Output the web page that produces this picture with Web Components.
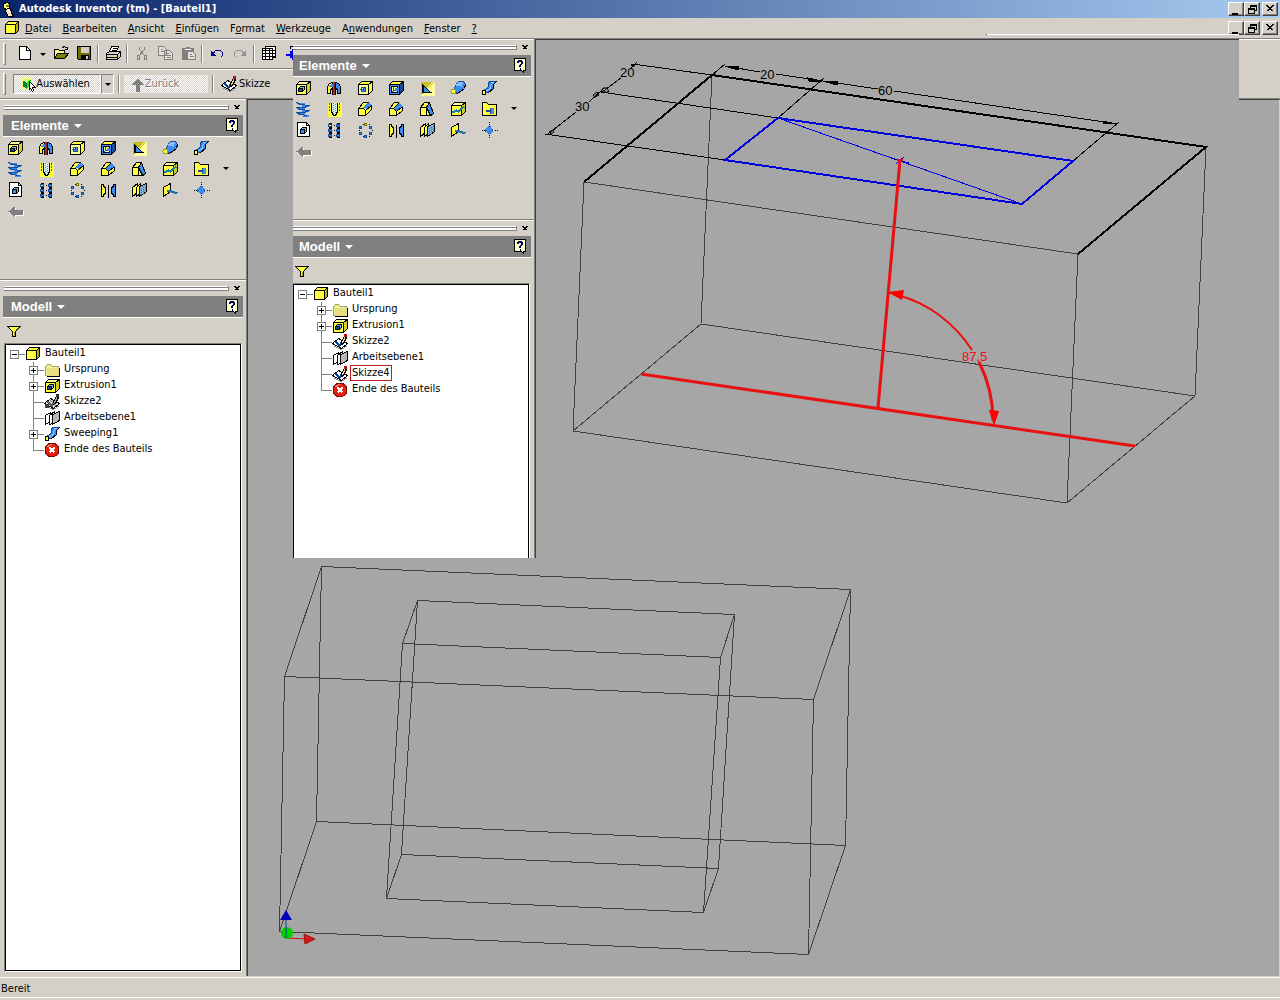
<!DOCTYPE html>
<html lang="de">
<head>
<meta charset="utf-8">
<title>Autodesk Inventor (tm) - [Bauteil1]</title>
<style>
    html, body { height: 100%; }
    body {
        margin: 0;
        overflow: hidden;
        background: #d4d0c8;
        color: #000;
        font: 11px/16px "DejaVu Sans Condensed", "DejaVu Sans", sans-serif;
        --face: #d4d0c8;
        --shadow: #808080;
        --dark: #404040;
    }
</style>
</head>
<body>
<inventor-app></inventor-app>

<script>
const Y = '#ffff40', B = '#3a8cf0', D = '#184a98', K = '#000';

// shared parts of the drawings
const cube = (front, top, side) => `
    <path d="M1 4L4 1H15V10L11 14H1Z" fill="${top}" stroke="${K}"/>
    <path d="M11 4L15 1V10L11 14Z" fill="${side}" stroke="${K}"/>
    <path d="M1 4H11V14H1Z" fill="${front}" stroke="${K}"/>`;
const dots = list => list.map(([x, y, c]) => `<path d="M${x} ${y}h3v2h-3z" fill="${c || B}" stroke="${D}"/><path d="M${x} ${y - 1}h3M${x} ${y + 3}h3" stroke="${K}"/>`).join('');
const sketch = (paper, pen, tip, mark) => `
    <path d="M0 9L6 4L15 9L9 14Z" fill="${paper}" stroke="${K}"/>
    <path d="M2 12L9 15L15 11" fill="none" stroke="#888"/>
    <path d="M3 7L7 11L9 8" fill="none" stroke="${mark}" stroke-width="2"/>
    <path d="M9 10V7L12 2L14 3L11 9Z" fill="${pen}" stroke="${K}"/>
    <path d="M12 0H14V2H12Z" fill="${tip}" stroke="${tip}"/>`;

const ICONS = {
    part: `<path d="M1 4L4 1H14V10L11 13H1Z" fill="${Y}" stroke="${K}"/><path d="M11 4L14 1V10L11 13Z" fill="#b8b000" stroke="${K}"/><path d="M1 4H11V13H1Z" fill="${Y}" stroke="${K}"/>`,
    logo: `<path d="M5 6L9 7L10 11L12 15H7L4 10Z" fill="#ffe0c0" stroke="${K}"/><path d="M2 3L5 1L8 2V6L5 8L2 6Z" fill="#ffff80" stroke="${K}"/><path d="M6 7V10M8 7V11" stroke="#fff"/><rect x="4" y="3" width="3" height="2" fill="#808020"/>`,
    extrude: cube(Y, '#ffffa0', '#d8d020') + `<path d="M3 8L5 6H9V9L7 11H3Z" fill="#70b8ff" stroke="${K}"/><path d="M3 8H7V11H3Z" fill="${D}" stroke="${K}"/>`,
    revolve: `<path d="M1 6L3 3L6 2V8L4 9V13H1Z" fill="${Y}" stroke="${K}"/><path d="M2 6L4 4L6 3V6H2Z" fill="${B}"/><path d="M9 2L12 3L14 6V13H11V9L9 8Z" fill="${B}" stroke="${K}"/><path d="M6 6V14M9 6V14" stroke="${K}"/><path d="M7 1V14" stroke="#e02020"/><path d="M8 1V14" stroke="#902020"/>`,
    hole: cube('#ffff90', Y, Y) + `<circle cx="6" cy="9" r="2.5" fill="${B}" stroke="${D}"/><path d="M4 8V7H6V9H4" fill="#ffffc0" stroke="${D}"/>`,
    shell: cube(B, Y, D) + `<path d="M3 6H9V12H3Z" fill="#ffffa0" stroke="${K}"/><path d="M5 6V10H9M5 10L3 12" fill="none" stroke="${D}"/><path d="M6 7H9V10H6Z" fill="${B}"/>`,
    rib: `<path d="M1 1H15V15H1Z" fill="#ffffa0"/><path d="M1 1H15L1 15Z" fill="#c8c020"/><path d="M3 4V12H11Z" fill="${B}" stroke="${K}"/><path d="M4 5V12H12" fill="none" stroke="${K}"/><path d="M7 8L14 1" stroke="#f8f880"/>`,
    loft: `<path d="M5 5L8 1H13L15 4L14 8L7 13L3 11Z" fill="${B}" stroke="${D}"/><path d="M8 1H13L11 6L5 5Z" fill="#80c0ff"/><path d="M7 13L14 8L15 4" fill="none" stroke="${K}"/><circle cx="3" cy="11" r="2.5" fill="${Y}" stroke="#a0a000"/>`,
    sweep: `<path d="M7 2L9 1H15L12 4V8L7 12L2 11L3 9L6 8L7 5Z" fill="${B}" stroke="${D}"/><path d="M9 2H12L9 5V8L5 10" fill="none" stroke="#80c8ff"/><path d="M15 1L12 4V8L7 12" fill="none" stroke="${K}"/><path d="M1 10H4V14H1Z" fill="${Y}" stroke="${K}"/>`,
    coil: `<path d="M2 2H9M6 4H13M2 7H9M6 9H13M2 12H9M7 14H13" fill="none" stroke="${B}" stroke-width="2"/><path d="M1 1L5 3L13 4L9 6L1 6L5 8L13 9L9 11L1 11L5 13L12 14" fill="none" stroke="${D}"/>`,
    thread: `<rect x="1" y="1" width="14" height="14" fill="${Y}"/><path d="M5 1H11V11L8 14L5 11Z" fill="#d8f0f0"/><path d="M3 1V10M13 1V10" stroke="#206080" stroke-dasharray="2 1"/><path d="M5 1V10L7 14H9L11 10V1" fill="none" stroke="${K}"/><path d="M7 1V12M9 2V12" stroke="#40a0b0" stroke-dasharray="1 1"/>`,
    fillet: `<path d="M1 7L6 1H11L14 4V8L8 14H1Z" fill="${Y}" stroke="${K}"/><path d="M5 6L10 1H12L14 4L9 9L8 7Z" fill="${B}"/><path d="M1 7H6L8 9V14M8 9L14 4" fill="none" stroke="${K}"/>`,
    chamfer: `<path d="M1 7L6 1H10L14 5V9L8 14H1Z" fill="${Y}" stroke="${K}"/><path d="M5 6L10 1L14 5L8 10Z" fill="${B}"/><path d="M1 7H5L8 10V14M8 10L14 5M5 7L10 2" fill="none" stroke="${K}"/>`,
    draft: `<path d="M1 6L5 1H10L14 12L12 14H1Z" fill="${Y}" stroke="${K}"/><path d="M7 6L10 1L14 12L11 14Z" fill="${B}" stroke="${K}"/><path d="M1 6H7V14" fill="none" stroke="${K}"/>`,
    split: cube(Y, '#ffffa0', '#d8d020') + `<path d="M1 10H4L6 9L8 10L10 8L14 5" fill="none" stroke="#2080a0" stroke-width="2"/>`,
    derive: `<path d="M1 1H5L7 3H15V14H1Z" fill="${Y}" stroke="${K}"/><path d="M4 8H8V6H10L12 8V11L10 12H8V10H4Z" fill="${D}"/><path d="M9 6H12V12H9Z" fill="${B}"/>`,
    sheet: `<path d="M2 0H11L14 3V14H2Z" fill="#fff" stroke="${K}"/><path d="M11 0V3H14" fill="none" stroke="${K}"/><path d="M5 7L7 5H11V9L9 11H5Z" fill="#70b8ff" stroke="${K}"/><path d="M5 7H9V11H5Z" fill="${B}" stroke="${K}"/>`,
    rectpattern: dots([[2, 2, Y], [10, 2], [2, 7], [10, 7], [2, 12], [10, 12]]) + `<path d="M7 3H8M7 8H8M7 13H8" stroke="${K}"/>`,
    circpattern: `<g fill="${B}" stroke="${D}"><path d="M7 1h2v2h-2z" fill="${Y}" stroke="#707000"/><path d="M2 4h2v2h-2zM12 4h2v2h-2zM2 10h2v2h-2zM12 10h2v2h-2zM7 13h2v2h-2z"/></g><path d="M5 2h1M11 2h1M1 8h1M14 8h1M5 14h1M11 14h1" stroke="${K}"/>`,
    mirror: `<path d="M1 2H3V4L5 5V11L3 12V14H1Z" fill="${Y}" stroke="${K}"/><path d="M15 2H13V4L11 5V11L13 12V14H15Z" fill="${B}" stroke="${K}"/><path d="M8 2V15" stroke="${K}"/>`,
    plane: `<path d="M1 5L6 1V10L1 14Z" fill="${Y}" stroke="${K}"/><path d="M5 5L9 1V11L5 14Z" fill="${Y}" stroke="${K}"/><path d="M8 4L15 1V9L8 14Z" fill="#80b0d8" stroke="${K}"/><path d="M10 5V12M12 4V11M14 3V9" stroke="#4070a0" stroke-dasharray="1 1"/>`,
    axis: `<path d="M1 5L8 1V9L1 14Z" fill="${Y}" stroke="${K}"/><path d="M5 8L9 9L15 11" fill="none" stroke="#2070a0" stroke-width="2"/>`,
    point: `<path d="M5 5H10V10H5Z" fill="${B}"/><path d="M6 4H9M6 11H9M4 6V9M11 6V9" stroke="#2060b0"/><path d="M6 5H9V10H6ZM5 6H10V9H5Z" fill="${B}" stroke="${B}"/><path d="M7 0h1M7 2h1M7 13h1M7 15h1M0 8h1M2 8h1M13 8h1M15 8h1" stroke="${K}"/>`,
    back: `<path d="M2 9L8 4V7H16V12H8V15Z" fill="#fff"/><path d="M1 8L7 3V6H15V11H7V14Z" fill="#808080"/>`,
    folder: `<path d="M1 4L3 2H6L8 4H14V13H1Z" fill="#f0f090" stroke="#a0a060"/><path d="M2 5H14V13H2Z" fill="#e8e080"/><path d="M15 5V14H2" fill="none" stroke="${K}"/>`,
    sketch: sketch('#fff', '#e8d880', '#b01010', '#1040a0'),
    sketchgray: sketch('#d8d8d8', '#a0a0a0', '#303030', '#505050') + `<rect x="0" y="9" width="4" height="4" fill="#404040"/><path d="M5 5L12 12M4 8L9 13" stroke="#707070"/>`,
    planegray: `<path d="M1 5L6 2V11L1 14Z" fill="#fff" stroke="${K}"/><path d="M5 5L10 1V12L5 14Z" fill="#fff" stroke="${K}"/><path d="M8 4L15 1V10L8 14Z" fill="#b8b8b8" stroke="${K}"/>`,
    end: `<circle cx="7.5" cy="7.5" r="7" fill="#e82010" stroke="#701008"/><path d="M3 5A5 5 0 0 1 8 2" fill="none" stroke="#ff9080"/><path d="M5 5L10 10M10 5L5 10" stroke="#fff" stroke-width="2"/>`,
    filter: `<path d="M1 3H14L9 8V13H6V8Z" fill="${Y}" stroke="${K}"/><path d="M8 8V12M12 4L9 7" stroke="#a0a000"/>`,
    help: `<path d="M2 1H13V13H11V15L9 13H2Z" fill="#ffffc8" stroke="${K}"/><path d="M5 5V4L6 3H9L10 4V6L8 8V9M6 5V4H9V6L7 8V9" fill="none" stroke="#000060"/><path d="M7 11H8" stroke="#000060" stroke-width="2"/>`,
    new: `<path d="M2 1H9L13 5V14H2Z" fill="#fff" stroke="${K}"/><path d="M9 1V5H13" fill="none" stroke="${K}"/>`,
    open: `<path d="M1 13V4H5L6 5H11V8" fill="#ffff90" stroke="${K}"/><path d="M1 13L4 8H15L11 13Z" fill="#808000" stroke="${K}"/><path d="M9 2L11 1L14 3M14 1V4H11" fill="none" stroke="${K}"/>`,
    save: `<path d="M1 1H14V14H2L1 13Z" fill="#707000" stroke="${K}"/><rect x="4" y="1" width="8" height="6" fill="#d4d0c8"/><rect x="4" y="9" width="8" height="5" fill="${K}"/><rect x="9" y="10" width="2" height="3" fill="#d4d0c8"/>`,
    print: `<path d="M4 6L6 1H13L11 6Z" fill="#fff" stroke="${K}"/><path d="M1 8L4 6H15V11L12 14H1Z" fill="#d4d0c8" stroke="${K}"/><path d="M1 9H12V14M12 9L15 6M1 12H12M7 3H11M6 5H10" fill="none" stroke="${K}"/><rect x="8" y="10" width="2" height="1" fill="${Y}"/>`,
    cut: `<path d="M5 1V4L10 10M10 1V4L5 10" fill="none" stroke="#808080"/><path d="M3 10H5V14H3ZM10 10H12V14H10Z" fill="none" stroke="#808080"/>`,
    copy: `<path d="M1 1H6L9 4V10H1ZM7 5H12L15 8V14H7Z" fill="#e4e0d8" stroke="#808080"/><path d="M3 4H5M3 6H7M9 8H11M9 10H13M9 12H13" stroke="#808080"/>`,
    paste: `<path d="M1 2H5V1H9V2H13V14H1Z" fill="#808080"/><path d="M7 6H12L15 9V14H7Z" fill="#e4e0d8" stroke="#808080"/><path d="M9 9H11M9 11H13" stroke="#808080"/><path d="M4 4H10" stroke="#fff"/>`,
    undo: `<path d="M2 5V10H6M2 10L6 5H11L13 7V10L11 12" fill="none" stroke="#000090"/><path d="M2 6V10H6Z" fill="#000090" stroke="#000090"/>`,
    redo: `<path d="M13 5V10H9M13 10L9 5H4L2 7V10L4 12" fill="none" stroke="#909090"/><path d="M13 6V10H9Z" fill="#909090" stroke="#909090"/>`,
    table: `<path d="M4 1H14V12H4Z" fill="#fff" stroke="${K}"/><path d="M1 3H11V14H1Z" fill="#fff" stroke="${K}"/><path d="M1 5H14M1 8H14M1 11H14M4 3V14M8 3V14" stroke="${K}"/>`,
    measure: `<path d="M1 8H5V5H7V3H12V14H7V12H5V10H1Z" fill="#0000e8"/><path d="M6 3V1H10V3" fill="none" stroke="${K}"/>`,
    select: `<path d="M0 3L4 0H9L11 3V11L7 13L1 12Z" fill="#ffff70" opacity=".8"/><path d="M2 4L6 6V12L2 10Z" fill="#008040"/><path d="M6 6L10 3V9L6 12Z" fill="#20e020"/><path d="M2 4L6 2L10 3L6 6Z" fill="#c0ff80"/><path d="M9 5L15 11H12L13 14L12 15L10 12L9 13Z" fill="#fff" stroke="${K}"/>`,
    up: `<path d="M8 2L14 8H10V15H6V8H2Z" fill="#808080"/>`,
    min: `<rect x="3" y="10" width="6" height="2" fill="${K}"/>`,
    restore: `<path d="M5 2H12V8H10V7H11V4H6V5H5ZM3 5H10V11H3ZM4 7V10H9V7Z" fill="${K}" fill-rule="evenodd"/>`,
    close: `<path d="M4 3L10 9M5 3L11 9M10 3L4 9M11 3L5 9" stroke="${K}"/>`,
    x: `<path d="M5 5L9 9M6 5L10 9M9 5L5 9M10 5L6 9" stroke="${K}"/>`
};

class CadIcon extends HTMLElement {
    connectedCallback() {
        this.attachShadow({ mode: 'open' });
        // half a unit off, so that 1px strokes fall on whole pixels
        this.shadowRoot.innerHTML = `
            <style>
                :host { display: block; flex: none; width: 16px; height: 16px; }
                svg { display: block; overflow: visible; }
                path, circle { fill-rule: evenodd; }
            </style>
            <svg width="16" height="16" viewBox="-0.5 -0.5 16 16" fill="none" shape-rendering="crispEdges" aria-hidden="true">${ICONS[this.getAttribute('name')]}</svg>`;
    }
}
customElements.define('cad-icon', CadIcon);

class WindowButtons extends HTMLElement {
    constructor() {
        super();
        this.attachShadow({ mode: 'open' }).innerHTML = `
            <style>
                :host { display: flex; flex: none; margin-left: auto; margin-right: 2px; }
                button {
                    width: 16px; height: 14px; padding: 0; overflow: hidden;
                    background: var(--face);
                    border: 1px solid; border-color: #fff #404040 #404040 #fff;
                    box-shadow: inset -1px -1px #808080;
                }
                button:last-child { margin-left: 2px; }
                cad-icon { margin: -1px; }
            </style>
            <button aria-label="Minimieren"><cad-icon name="min"></cad-icon></button>
            <button aria-label="Wiederherstellen"><cad-icon name="restore"></cad-icon></button>
            <button aria-label="Schließen"><cad-icon name="close"></cad-icon></button>`;
    }
}
customElements.define('window-buttons', WindowButtons);

class TitleBar extends HTMLElement {
    constructor() {
        super();
        this.attachShadow({ mode: 'open' }).innerHTML = `
            <style>
                :host {
                    display: flex; align-items: center; height: 18px;
                    background: linear-gradient(to right, #0a246a, #a6caf0);
                    color: #fff; font-weight: bold; line-height: 18px;
                }
                cad-icon { margin-left: 1px; margin-right: 2px; }
            </style>
            <cad-icon name="logo"></cad-icon><slot></slot><window-buttons></window-buttons>`;
    }
}
customElements.define('title-bar', TitleBar);

class MenuBar extends HTMLElement {
    constructor() {
        super();
        this.attachShadow({ mode: 'open' }).innerHTML = `
            <style>
                :host {
                    display: flex; align-items: center; position: relative;
                    height: 20px; border-bottom: 1px solid var(--shadow);
                }
                cad-icon { margin: 0 0 0 4px; }
                nav { display: flex; padding-top: 1px; }
                button {
                    padding: 0 6px 0 5px; border: 0; background: none;
                    font: inherit; color: inherit;
                }
                .edge {
                    position: absolute; top: 16px; right: 41px; width: 252px;
                    height: 1px; background: #fff; border-left: 1px solid var(--dark);
                }
            </style>
            <cad-icon name="part"></cad-icon>
            <nav>
                <button><u>D</u>atei</button>
                <button><u>B</u>earbeiten</button>
                <button><u>A</u>nsicht</button>
                <button><u>E</u>infügen</button>
                <button>F<u>o</u>rmat</button>
                <button><u>W</u>erkzeuge</button>
                <button>A<u>n</u>wendungen</button>
                <button><u>F</u>enster</button>
                <button><u>?</u></button>
            </nav>
            <window-buttons></window-buttons>
            <div class="edge"></div>`;
    }
}
customElements.define('menu-bar', MenuBar);

const TOOLBAR_CSS = `
    :host { display: flex; align-items: center; height: 28px; }
    button {
        display: flex; align-items: center; justify-content: center;
        height: 22px; padding: 0; border: 0; background: none;
        font: inherit; color: inherit;
    }
    .grip {
        width: 1px; height: 20px; margin: 0 7px 0 3px;
        border: 1px solid; border-color: #fff #808080 #808080 #fff;
    }
    .sep { width: 1px; height: 18px; margin: 0 2px; background: #808080; border-right: 1px solid #fff; }
    .drop::before {
        content: ''; border: 3px solid transparent;
        border-top-color: #000; border-bottom: 0;
    }`;

class StandardToolbar extends HTMLElement {
    constructor() {
        super();
        const tool = (name, label) => `<button class="tool" aria-label="${label}"><cad-icon name="${name}"></cad-icon></button>`;
        this.attachShadow({ mode: 'open' }).innerHTML = `
            <style>${TOOLBAR_CSS}
                .tool { width: 23px; padding-bottom: 2px; }
                .drop { width: 13px; }
            </style>
            <div class="grip"></div>
            ${tool('new', 'Neu')}
            <button class="drop" aria-label="Vorlagen"></button>
            ${tool('open', 'Öffnen')}${tool('save', 'Speichern')}
            <div class="sep"></div>
            ${tool('print', 'Drucken')}
            <div class="sep"></div>
            ${tool('cut', 'Ausschneiden')}${tool('copy', 'Kopieren')}${tool('paste', 'Einfügen')}
            <div class="sep"></div>
            ${tool('undo', 'Rückgängig')}${tool('redo', 'Wiederholen')}
            <div class="sep"></div>
            ${tool('table', 'Parameter')}${tool('measure', 'Abstand messen')}`;
    }
}
customElements.define('standard-toolbar', StandardToolbar);

class CommandToolbar extends HTMLElement {
    constructor() {
        super();
        this.attachShadow({ mode: 'open' }).innerHTML = `
            <style>${TOOLBAR_CSS}
                .sep { margin: 0 4px; }
                .pressed, .off {
                    background: repeating-conic-gradient(#fff 0 25%, var(--face) 0 50%) 0 0 / 2px 2px;
                }
                .pressed {
                    box-sizing: border-box; width: 88px; height: 20px; padding-right: 4px;
                    border: 1px solid; border-color: #808080 #fff #fff #808080;
                }
                .drop { box-sizing: border-box; width: 13px; height: 20px; border: 1px solid; border-color: #808080 #fff #fff #808080; }
                .off { width: 84px; height: 18px; padding-right: 24px; color: #808080; text-shadow: 1px 1px #fff; }
                .sketch { gap: 2px; padding-left: 3px; }
            </style>
            <div class="grip"></div>
            <button class="pressed"><cad-icon name="select"></cad-icon>Auswählen</button>
            <button class="drop" aria-label="Auswahlfilter"></button>
            <div class="sep"></div>
            <button class="off" disabled><cad-icon name="up"></cad-icon>Zurück</button>
            <div class="sep"></div>
            <button class="sketch"><cad-icon name="sketch"></cad-icon>Skizze</button>`;
    }
}
customElements.define('command-toolbar', CommandToolbar);

class DockPanel extends HTMLElement {
    connectedCallback() {
        this.attachShadow({ mode: 'open' });
        this.shadowRoot.innerHTML = `
            <style>
                :host {
                    display: flex; flex-direction: column; box-sizing: border-box;
                    border-top: 1px solid #fff; min-height: 0;
                }
                .handle { display: flex; align-items: center; flex: none; height: 15px; padding: 0 1px 0 4px; }
                .bars {
                    flex: 1; height: 5px; border-right: 1px solid #808080;
                    background: linear-gradient(#fff 1px, #808080 1px 2px, #fff 2px 4px, #808080 4px);
                }
                .handle button { padding: 0; border: 0; background: none; }
                header {
                    display: flex; align-items: center; flex: none; height: 21px;
                    margin: 0 3px; padding: 0 3px 0 8px;
                    background: #808080; border-bottom: 1px solid #fff;
                    color: #fff;
                }
                h2 { margin: 0; font: bold 13px/20px "Liberation Sans", sans-serif; }
                header button { padding: 0 0 2px; border: 0; background: none; }
                .menu { margin: 0 auto 0 5px; border: 4px solid transparent; border-top-color: #fff; border-bottom: 0; }
            </style>
            <div class="handle">
                <div class="bars"></div>
                <button aria-label="Schließen"><cad-icon name="x"></cad-icon></button>
            </div>
            <header>
                <h2>${this.getAttribute('heading')}</h2>
                <div class="menu"></div>
                <button aria-label="Hilfe"><cad-icon name="help"></cad-icon></button>
            </header>
            <slot></slot>`;
    }
}
customElements.define('dock-panel', DockPanel);

class FeaturePalette extends HTMLElement {
    constructor() {
        super();
        const features = [
            ['extrude', 'Extrusion'], ['revolve', 'Drehung'], ['hole', 'Bohrung'], ['shell', 'Wandstärke'],
            ['rib', 'Rippe'], ['loft', 'Erhebung'], ['sweep', 'Sweeping'],
            ['coil', 'Spirale'], ['thread', 'Gewinde'], ['fillet', 'Rundung'], ['chamfer', 'Fase'],
            ['draft', 'Flächenverjüngung'], ['split', 'Trennen'], ['derive', 'Abgeleitete Komponente'],
            ['sheet', 'iFeature'], ['rectpattern', 'Rechteckige Anordnung'], ['circpattern', 'Runde Anordnung'],
            ['mirror', 'Spiegeln'], ['plane', 'Arbeitsebene'], ['axis', 'Arbeitsachse'], ['point', 'Arbeitspunkt'],
            ['back', 'Zurück']
        ];
        this.attachShadow({ mode: 'open' }).innerHTML = `
            <style>
                :host {
                    display: grid; grid-template-columns: repeat(7, 31px) 18px;
                    grid-auto-rows: 21px;
                }
                button { display: grid; place-items: center; padding: 0; border: 0; background: none; }
                .tool { place-items: center start; padding-left: 7px; }
                .tool:nth-of-type(7n + 1) { grid-column: 1; }
                .drop { grid-area: 2 / 8; }
                .drop::before { content: ''; border: 3px solid transparent; border-top-color: #000; border-bottom: 0; }
            </style>
            ${features.map(([name, label]) => `<button class="tool" aria-label="${label}"><cad-icon name="${name}"></cad-icon></button>`).join('')}
            <button class="drop" aria-label="Weitere"></button>`;
    }
}
customElements.define('feature-palette', FeaturePalette);

class TreeItem extends HTMLElement {
    connectedCallback() {
        const sign = this.getAttribute('sign');
        this.attachShadow({ mode: 'open' });
        this.shadowRoot.innerHTML = `
            <style>
                :host { display: flex; align-items: center; height: 16px; padding-left: 24px; }
                :host([root]) { padding-left: 5px; }
                .branch {
                    display: grid; place-items: center start; flex: none; width: 15px; height: 16px;
                    background:
                        linear-gradient(#808080, #808080) 4px 0 / 1px 100% no-repeat,
                        linear-gradient(#808080, #808080) 4px 8px / 11px 1px no-repeat;
                }
                :host([root]) .branch { background-size: 0 0, 11px 1px; }
                :host([last]) .branch { background-size: 1px 50%, 11px 1px; }
                button {
                    box-sizing: border-box; width: 9px; height: 9px; padding: 0; margin-top: 1px;
                    border: 1px solid #808080;
                    background:
                        linear-gradient(#000, #000) center / 5px 1px no-repeat,
                        linear-gradient(#000, #000) center / 1px 5px no-repeat, #fff;
                }
                button.minus { background: linear-gradient(#000, #000) center / 5px 1px no-repeat #fff; }
                .label { padding: 0 1px; margin-left: 3px; line-height: 14px; margin-bottom: 2px; }
                :host([marked]) .label { outline: 1px solid #c02020; }
            </style>
            <div class="branch">${sign ? `<button class="${sign}" aria-label="Knoten"></button>` : ''}</div>
            <cad-icon name="${this.getAttribute('icon')}"></cad-icon>
            <span class="label"><slot></slot></span>`;
    }
}
customElements.define('tree-item', TreeItem);

class ModelTree extends HTMLElement {
    constructor() {
        super();
        this.attachShadow({ mode: 'open' }).innerHTML = `
            <style>
                :host { display: flex; flex-direction: column; flex: 1; min-height: 0; }
                button { align-self: flex-start; height: 25px; padding: 0 6px; border: 0; background: none; }
                .list {
                    flex: 1; min-height: 0; margin: 0 4px 4px; overflow: hidden; background: #fff;
                    border: 1px solid; border-color: #808080 #fff #fff #808080;
                    box-shadow: inset 1px 1px #000, inset -1px 0 #000, inset 0 -1px #000;
                    padding-top: 2px;
                }
            </style>
            <button aria-label="Filter"><cad-icon name="filter"></cad-icon></button>
            <div class="list"><slot></slot></div>`;
    }
}
customElements.define('model-tree', ModelTree);

class SideDock extends HTMLElement {
    constructor() {
        super();
        this.attachShadow({ mode: 'open' }).innerHTML = `
            <style>
                :host {
                    display: flex; flex-direction: column; box-sizing: border-box; flex: none;
                    width: 247px; min-height: 0;
                    background: var(--face); border-right: 1px solid var(--shadow);
                }
                .top { flex: none; min-height: 181px; border-bottom: 1px solid var(--shadow); }
                .rest { flex: 1; }
            </style>
            <dock-panel class="top" heading="Elemente"><feature-palette></feature-palette></dock-panel>
            <dock-panel class="rest" heading="Modell"><model-tree><slot></slot></model-tree></dock-panel>`;
    }
}
customElements.define('side-dock', SideDock);

const VIEW_CSS = `
    :host {
        display: block; flex: 1; min-width: 0; overflow: hidden;
        background: #a6a6a6; border: 0 solid var(--dark); border-width: 1px 0 0 1px;
    }
    svg { display: block; }
    path { fill: none; stroke: #404040; }
    text { font: 13px "Liberation Sans", sans-serif; }`;

class PartView extends HTMLElement {
    constructor() {
        super();
        this.attachShadow({ mode: 'open' }).innerHTML = `
            <style>${VIEW_CSS}
                :host { border-right: 1px solid #d4d0c8; }
            </style>
            <svg width="620" height="876" viewBox="248 100 620 876">
                <g shape-rendering="crispEdges" transform="translate(.5 .5)">
                    <!-- block -->
                    <path d="M321 566L850 589L813 699L284 676ZM316 821L845 845L808 954L279 931ZM321 566L316 821M850 589L845 845M813 699L808 954M284 676L279 931"/>
                    <!-- swept cut -->
                    <path d="M417 600L734 614L720 657L402 643ZM401 854L718 868L703 912L386 898ZM417 600L401 854M734 614L718 868M720 657L703 912M402 643L386 898"/>
                </g>
                <!-- axis triad -->
                <path d="M286 938L306 939" style="stroke:#d01010"/>
                <path d="M304 934L315 939L305 944Z" style="fill:#d81818;stroke:#a01010"/>
                <circle cx="287" cy="933" r="6" fill="#00d000"/>
                <path d="M286 938V920" style="stroke:#0040a0"/>
                <path d="M286 910L292 920H280Z" style="fill:#0000c0;stroke:none"/>
            </svg>`;
    }
}
customElements.define('part-view', PartView);

class SketchView extends HTMLElement {
    constructor() {
        super();
        this.attachShadow({ mode: 'open' }).innerHTML = `
            <style>${VIEW_CSS}
                .bold { stroke: #000; stroke-width: 2; }
                .dim { stroke: #000; }
                .blue { stroke: #0000e0; }
                .red { stroke: #e81010; stroke-width: 3; }
                .head { fill: #000; stroke: #000; }
                .red-head { fill: #f00; stroke: none; }
            </style>
            <svg width="700" height="518" viewBox="536 40 700 518">
                <g shape-rendering="crispEdges">
                    <path d="M584 182L1078 254M573 431L701 324L1195 396L1067 503ZM712 75L701 324M1206 147L1195 396M1078 254L1067 503M584 182L573 431"/>
                    <path class="bold" d="M584 182L712 75L1206 147L1078 254"/>
                    <!-- dimension and extension lines -->
                    <path class="dim" d="M633 64L712 75M601 92L778 118M545 134L725 160M712 75L725 64M778 118L824 78M1073 161L1119 122"/>
                    <path class="dim" d="M637 62L630 69M621 78L602 92M604 88L589 102M576 112L548 134M725 66L760 72M776 74L823 81L878 89M894 91L1118 124"/>
                    <path class="head" d="M725 66L739 67L738 70ZM822 81L808 78L809 81ZM823 81L838 82L837 85ZM1116 124L1103 121L1103 123ZM631 64L636 64L633 67Z"/>
                    <path class="blue" stroke-width="2" d="M778 118L1073 161L1022 204L725 160Z"/>
                    <path class="blue" d="M778 118L1022 204M891 158L909 163M896 164L904 157"/>
                </g>
                <path class="dim" d="M601 92L603 88L607 88L609 92ZM593 95L597 92L599 95L595 97ZM549 132L553 130L554 132L551 134Z"/>
                <path class="red" d="M900 160L878 408M641 374L1135 446"/>
                <path class="red" style="stroke-width:2" d="M897 295C929 303 955 324 972 350"/>
                <path class="red" d="M979 362C988 380 993 398 993 420"/>
                <path class="red-head" d="M887 292L904 290L902 300ZM994 426L989 410L999 411Z"/>
                <path class="red" style="stroke-width:2" d="M897 160H903"/>
                <text x="620" y="77">20</text>
                <text x="575" y="111">30</text>
                <text x="760" y="79">20</text>
                <text x="878" y="95">60</text>
                <text x="962" y="361" fill="#e81010">87,5</text>
            </svg>`;
    }
}
customElements.define('sketch-view', SketchView);

class StatusBar extends HTMLElement {
    constructor() {
        super();
        this.attachShadow({ mode: 'open' }).innerHTML = `
            <style>
                :host {
                    display: block; flex: none; margin: 1px 0 2px; padding: 3px 1px 0; line-height: 16px;
                    border-top: 1px solid #fff; border-bottom: 1px solid #fff;
                }
            </style>
            <slot></slot>`;
    }
}
customElements.define('status-bar', StatusBar);

class InventorApp extends HTMLElement {
    constructor() {
        super();
        this.attachShadow({ mode: 'open' }).innerHTML = `
            <style>
                :host { display: flex; flex-direction: column; height: 100vh; position: relative; }
                title-bar, menu-bar, .toolbars { flex: none; }
                .toolbars { border-top: 1px solid #fff; border-bottom: 1px solid var(--shadow); }
                .toolbars hr {
                    height: 1px; margin: 0 20% 0 0; border: 0;
                    background: var(--shadow); border-bottom: 1px solid #fff;
                }
                main { display: flex; flex: 1; min-height: 0; }
                /* second window lying over the first */
                .overlay {
                    position: absolute; left: 293px; right: 41px; top: 39px; height: 519px;
                    display: flex; overflow: hidden;
                }
                .overlay side-dock { margin-left: -5px; height: 620px; }
            </style>
            <title-bar>Autodesk Inventor (tm) - [Bauteil1]</title-bar>
            <menu-bar></menu-bar>
            <div class="toolbars">
                <standard-toolbar></standard-toolbar>
                <hr>
                <command-toolbar></command-toolbar>
            </div>
            <main>
                <side-dock>
                    <tree-item root sign="minus" icon="part">Bauteil1</tree-item>
                    <tree-item sign="plus" icon="folder">Ursprung</tree-item>
                    <tree-item sign="plus" icon="extrude">Extrusion1</tree-item>
                    <tree-item icon="sketchgray">Skizze2</tree-item>
                    <tree-item icon="planegray">Arbeitsebene1</tree-item>
                    <tree-item sign="plus" icon="sweep">Sweeping1</tree-item>
                    <tree-item last icon="end">Ende des Bauteils</tree-item>
                </side-dock>
                <part-view></part-view>
            </main>
            <status-bar>Bereit</status-bar>
            <section class="overlay">
                <side-dock>
                    <tree-item root sign="minus" icon="part">Bauteil1</tree-item>
                    <tree-item sign="plus" icon="folder">Ursprung</tree-item>
                    <tree-item sign="plus" icon="extrude">Extrusion1</tree-item>
                    <tree-item icon="sketch">Skizze2</tree-item>
                    <tree-item icon="planegray">Arbeitsebene1</tree-item>
                    <tree-item marked icon="sketch">Skizze4</tree-item>
                    <tree-item last icon="end">Ende des Bauteils</tree-item>
                </side-dock>
                <sketch-view></sketch-view>
            </section>`;
    }
}
customElements.define('inventor-app', InventorApp);
</script>
</body>
</html>
